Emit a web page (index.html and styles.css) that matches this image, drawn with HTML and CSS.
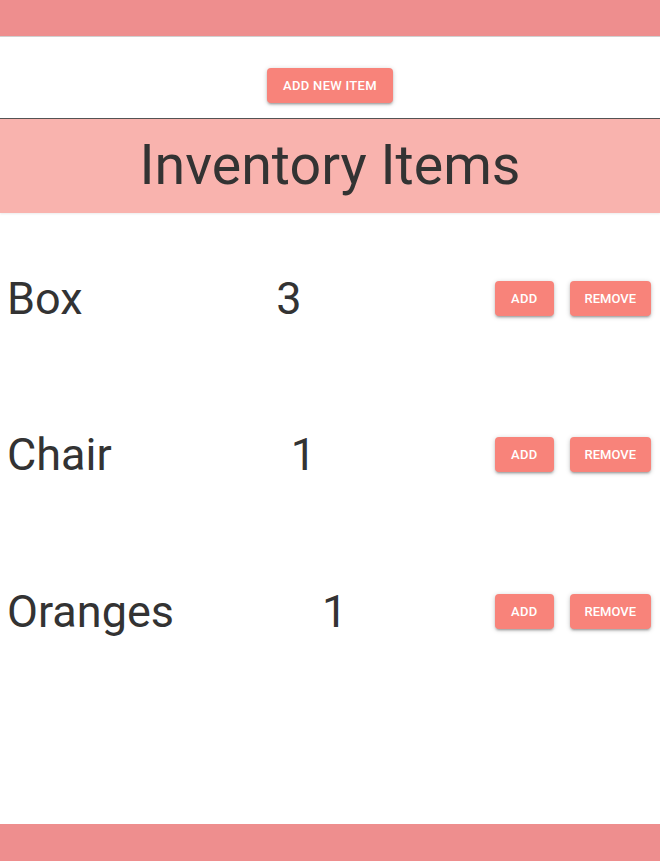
FILE: index.html
```html
<!DOCTYPE html>
<html lang="en">
<head>
<meta charset="utf-8">
<title>Inventory</title>
<link rel="stylesheet" href="styles.css">
</head>
<body>
<div class="page">
  <header class="topbar"></header>
  <section class="toolbar">
    <button class="btn">Add New Item</button>
  </section>
  <section class="title-bar">
    <h1 class="title">Inventory Items</h1>
  </section>
  <main class="list">
    <div class="row">
      <span class="name">Box</span>
      <span class="qty">3</span>
      <div class="actions">
        <button class="btn">Add</button>
        <button class="btn btn-remove">Remove</button>
      </div>
    </div>
    <div class="row">
      <span class="name">Chair</span>
      <span class="qty">1</span>
      <div class="actions">
        <button class="btn">Add</button>
        <button class="btn btn-remove">Remove</button>
      </div>
    </div>
    <div class="row">
      <span class="name">Oranges</span>
      <span class="qty">1</span>
      <div class="actions">
        <button class="btn">Add</button>
        <button class="btn btn-remove">Remove</button>
      </div>
    </div>
  </main>
  <footer class="footer"></footer>
</div>
</body>
</html>
```
FILE: styles.css
```css
* { box-sizing: border-box; }
html, body { margin: 0; padding: 0; }
body {
  font-family: Roboto, "Liberation Sans", sans-serif;
  color: #333;
  background: #fff;
}
.page {
  min-height: 100vh;
  display: flex;
  flex-direction: column;
}
.topbar {
  height: 37px;
  background: #ee8e8e;
  border-bottom: 1px solid #d0d0d0;
}
.toolbar {
  display: flex;
  justify-content: center;
  padding: 31px 0 15px;
  border-bottom: 1px solid #555;
}
.btn {
  font-family: Roboto, "Liberation Sans", sans-serif;
  font-weight: 500;
  font-size: 13px;
  letter-spacing: 0.3px;
  text-transform: uppercase;
  color: #fff;
  background: #f8837a;
  border: none;
  border-radius: 4px;
  height: 35px;
  padding: 0 16px;
  box-shadow: 0 2px 2px rgba(0,0,0,.14), 0 3px 1px -2px rgba(0,0,0,.12), 0 1px 5px rgba(0,0,0,.2);
  cursor: pointer;
}
.btn-remove {
  padding: 0 15px;
  letter-spacing: 0;
}
.title-bar {
  background: #f9b3ae;
  height: 94px;
  display: flex;
  align-items: center;
  justify-content: center;
  box-shadow: 0 1px 2px rgba(0,0,0,.08);
}
.title {
  margin: 0;
  font-size: 55.5px;
  font-weight: 400;
  line-height: 1;
  color: #333;
}
.list {
  flex: 1;
  padding-top: 7px;
}
.row {
  height: 156.5px;
  display: flex;
  align-items: center;
  justify-content: space-between;
  padding: 0 1px 0 7px;
}
.name, .qty {
  font-size: 45px;
  line-height: 1;
}
.qty {
  margin-left: 8px;
}
.actions {
  display: flex;
}
.actions .btn {
  margin: 0 8px;
}
.footer {
  height: 37px;
  background: #ee8e8e;
}
```
